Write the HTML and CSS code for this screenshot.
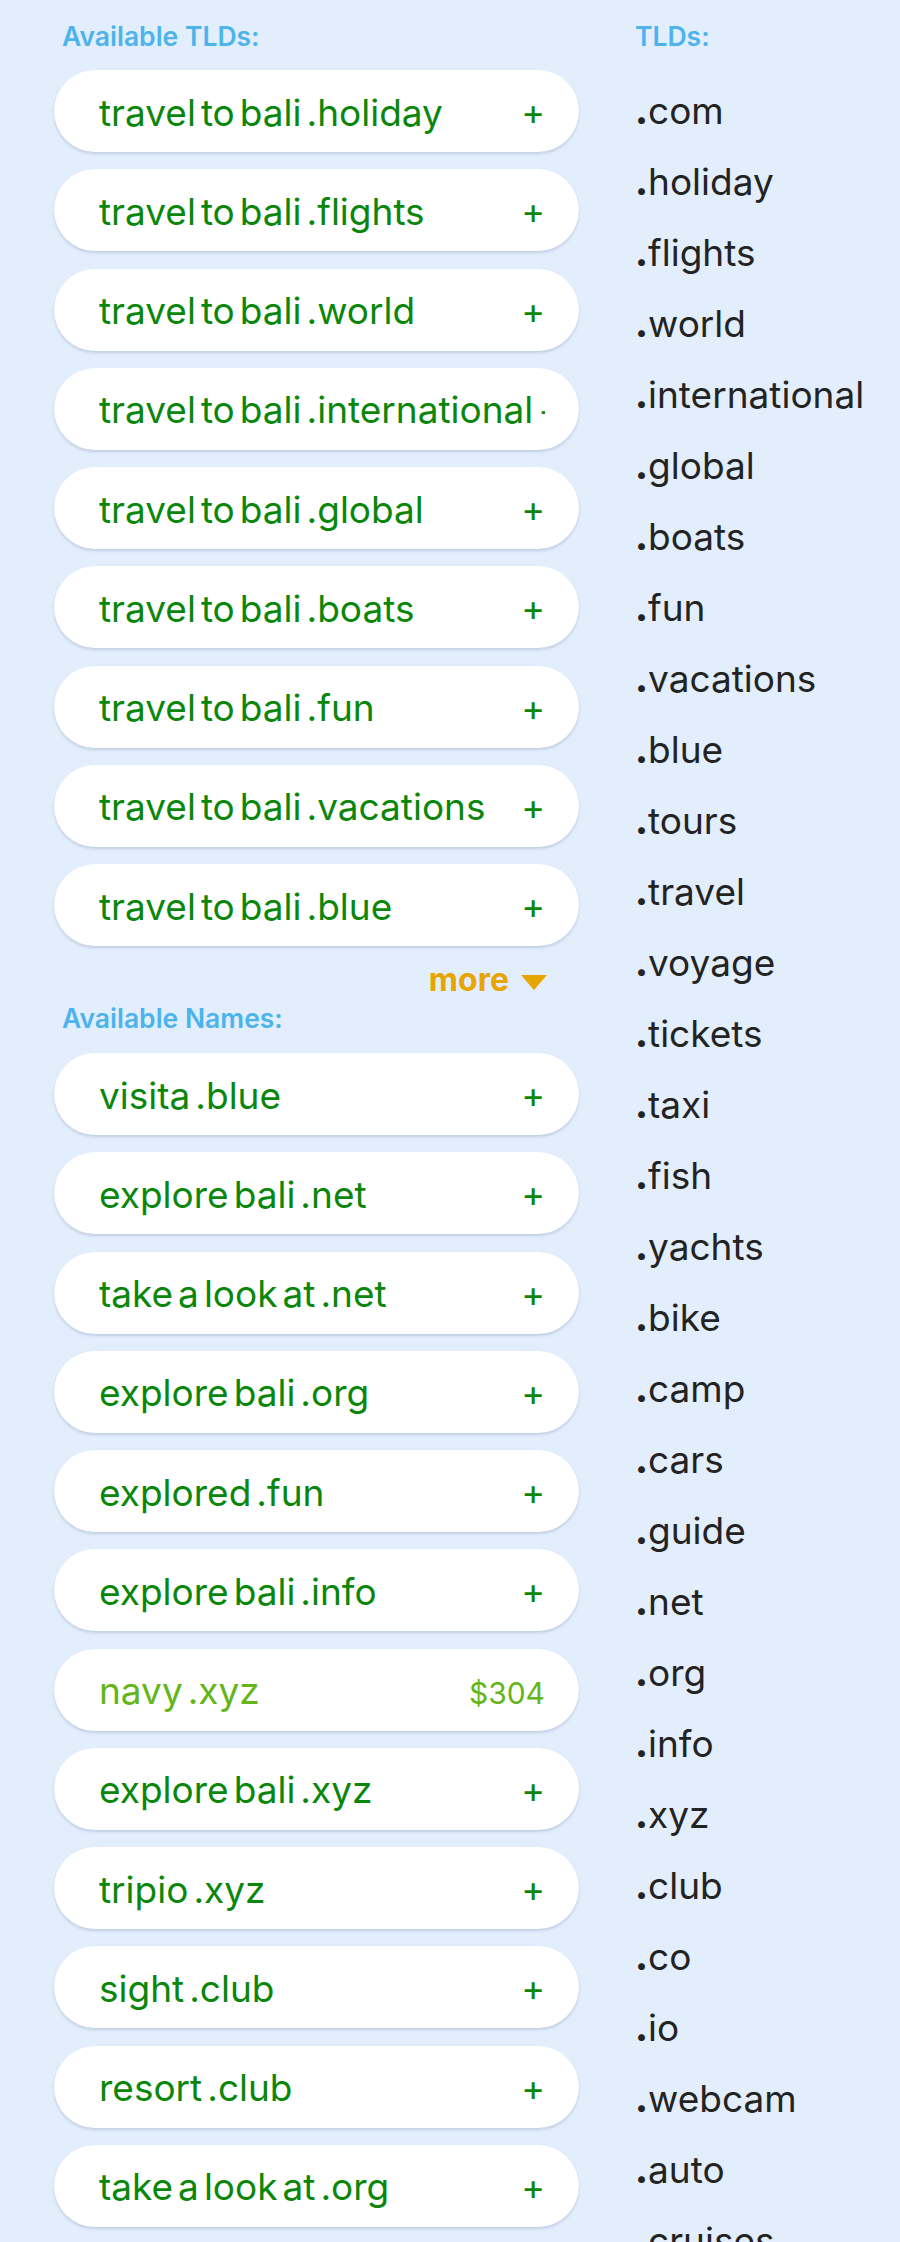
FILE: index.html
```html
<!DOCTYPE html>
<html lang="en">
<head>
<meta charset="utf-8">
<title>Domains</title>
<link rel="stylesheet" href="styles.css">
</head>
<body>
<div class="page">
  <section class="left">
    <h2 class="title">Available TLDs:</h2>
    <div class="list">
      <div class="card"><div class="name"><span>travel</span><span>to</span><span>bali</span><span>.holiday</span><span class="add">+</span></div></div>
      <div class="card"><div class="name"><span>travel</span><span>to</span><span>bali</span><span>.flights</span><span class="add">+</span></div></div>
      <div class="card"><div class="name"><span>travel</span><span>to</span><span>bali</span><span>.world</span><span class="add">+</span></div></div>
      <div class="card"><div class="name"><span>travel</span><span>to</span><span>bali</span><span>.international</span><span class="add">+</span></div></div>
      <div class="card"><div class="name"><span>travel</span><span>to</span><span>bali</span><span>.global</span><span class="add">+</span></div></div>
      <div class="card"><div class="name"><span>travel</span><span>to</span><span>bali</span><span>.boats</span><span class="add">+</span></div></div>
      <div class="card"><div class="name"><span>travel</span><span>to</span><span>bali</span><span>.fun</span><span class="add">+</span></div></div>
      <div class="card"><div class="name"><span>travel</span><span>to</span><span>bali</span><span>.vacations</span><span class="add">+</span></div></div>
      <div class="card"><div class="name"><span>travel</span><span>to</span><span>bali</span><span>.blue</span><span class="add">+</span></div></div>
    </div>
    <div class="more"><span>more</span><span class="tri"></span></div>
    <h2 class="title names-title">Available Names:</h2>
    <div class="list">
      <div class="card"><div class="name"><span>visita</span><span>.blue</span><span class="add">+</span></div></div>
      <div class="card"><div class="name"><span>explore</span><span>bali</span><span>.net</span><span class="add">+</span></div></div>
      <div class="card"><div class="name"><span>take</span><span>a</span><span>look</span><span>at</span><span>.net</span><span class="add">+</span></div></div>
      <div class="card"><div class="name"><span>explore</span><span>bali</span><span>.org</span><span class="add">+</span></div></div>
      <div class="card"><div class="name"><span>explored</span><span>.fun</span><span class="add">+</span></div></div>
      <div class="card"><div class="name"><span>explore</span><span>bali</span><span>.info</span><span class="add">+</span></div></div>
      <div class="card premium"><div class="name"><span>navy</span><span>.xyz</span><span class="price">$304</span></div></div>
      <div class="card"><div class="name"><span>explore</span><span>bali</span><span>.xyz</span><span class="add">+</span></div></div>
      <div class="card"><div class="name"><span>tripio</span><span>.xyz</span><span class="add">+</span></div></div>
      <div class="card"><div class="name"><span>sight</span><span>.club</span><span class="add">+</span></div></div>
      <div class="card"><div class="name"><span>resort</span><span>.club</span><span class="add">+</span></div></div>
      <div class="card"><div class="name"><span>take</span><span>a</span><span>look</span><span>at</span><span>.org</span><span class="add">+</span></div></div>
    </div>
  </section>
  <aside class="right">
    <h2 class="title">TLDs:</h2>
    <ul class="tlds">
      <li><b>.</b>com</li>
      <li><b>.</b>holiday</li>
      <li><b>.</b>flights</li>
      <li><b>.</b>world</li>
      <li><b>.</b>international</li>
      <li><b>.</b>global</li>
      <li><b>.</b>boats</li>
      <li><b>.</b>fun</li>
      <li><b>.</b>vacations</li>
      <li><b>.</b>blue</li>
      <li><b>.</b>tours</li>
      <li><b>.</b>travel</li>
      <li><b>.</b>voyage</li>
      <li><b>.</b>tickets</li>
      <li><b>.</b>taxi</li>
      <li><b>.</b>fish</li>
      <li><b>.</b>yachts</li>
      <li><b>.</b>bike</li>
      <li><b>.</b>camp</li>
      <li><b>.</b>cars</li>
      <li><b>.</b>guide</li>
      <li><b>.</b>net</li>
      <li><b>.</b>org</li>
      <li><b>.</b>info</li>
      <li><b>.</b>xyz</li>
      <li><b>.</b>club</li>
      <li><b>.</b>co</li>
      <li><b>.</b>io</li>
      <li><b>.</b>webcam</li>
      <li><b>.</b>auto</li>
      <li><b>.</b>cruises</li>
    </ul>
  </aside>
</div>
</body>
</html>
```
FILE: styles.css
```css
html, body {
  margin: 0;
  padding: 0;
  background: #e3eefd;
}
body {
  font-family: Inter, "Noto Sans", "Liberation Sans", sans-serif;
  height: 2242px;
  overflow: hidden;
}
.page {
  display: grid;
  grid-template-columns: 525px 1fr;
  column-gap: 56px;
  padding: 21px 0 0 54px;
}
.title {
  margin: 0 0 19px 8px;
  font-size: 26.5px;
  line-height: 30px;
  font-weight: 600;
  color: #4cb3ec;
}
.right .title {
  margin-left: 0;
  margin-bottom: 24px;
}
.names-title {
  margin-top: 5px;
  margin-bottom: 20px;
}
.list {
  display: flex;
  flex-direction: column;
  gap: 17.25px;
}
.card {
  height: 82px;
  border-radius: 41px;
  background: #fff;
  box-shadow: 0 2px 3px rgba(70, 95, 130, 0.22);
  display: flex;
  align-items: center;
  padding: 2px 34px 0 45px;
  box-sizing: border-box;
}
.name {
  flex: 1;
  min-width: 0;
  display: flex;
  align-items: baseline;
  gap: 5px;
  overflow: hidden;
  font-size: 37px;
  color: #0a870a;
  white-space: nowrap;
}
.name span {
  flex-shrink: 0;
}
.add {
  margin-left: auto;
  align-self: center;
  font-size: 36px;
  line-height: 1;
}
.premium .name {
  color: #64b517;
}
.price {
  margin-left: auto;
  font-size: 30px;
}
.more {
  display: flex;
  justify-content: flex-end;
  align-items: center;
  gap: 12px;
  margin-top: 16px;
  padding-right: 32px;
  height: 36px;
  font-size: 32px;
  line-height: 36px;
  font-weight: 700;
  color: #e6a500;
}
.tri {
  width: 0;
  height: 0;
  border-left: 13.5px solid transparent;
  border-right: 13.5px solid transparent;
  border-top: 15px solid #e6a500;
  margin-top: 4px;
}
.tlds {
  list-style: none;
  margin: 0;
  padding: 0;
}
.tlds li {
  font-size: 37px;
  line-height: 71px;
  height: 71px;
  color: #232323;
  white-space: nowrap;
}
.tlds b {
  font-weight: 800;
}
```
